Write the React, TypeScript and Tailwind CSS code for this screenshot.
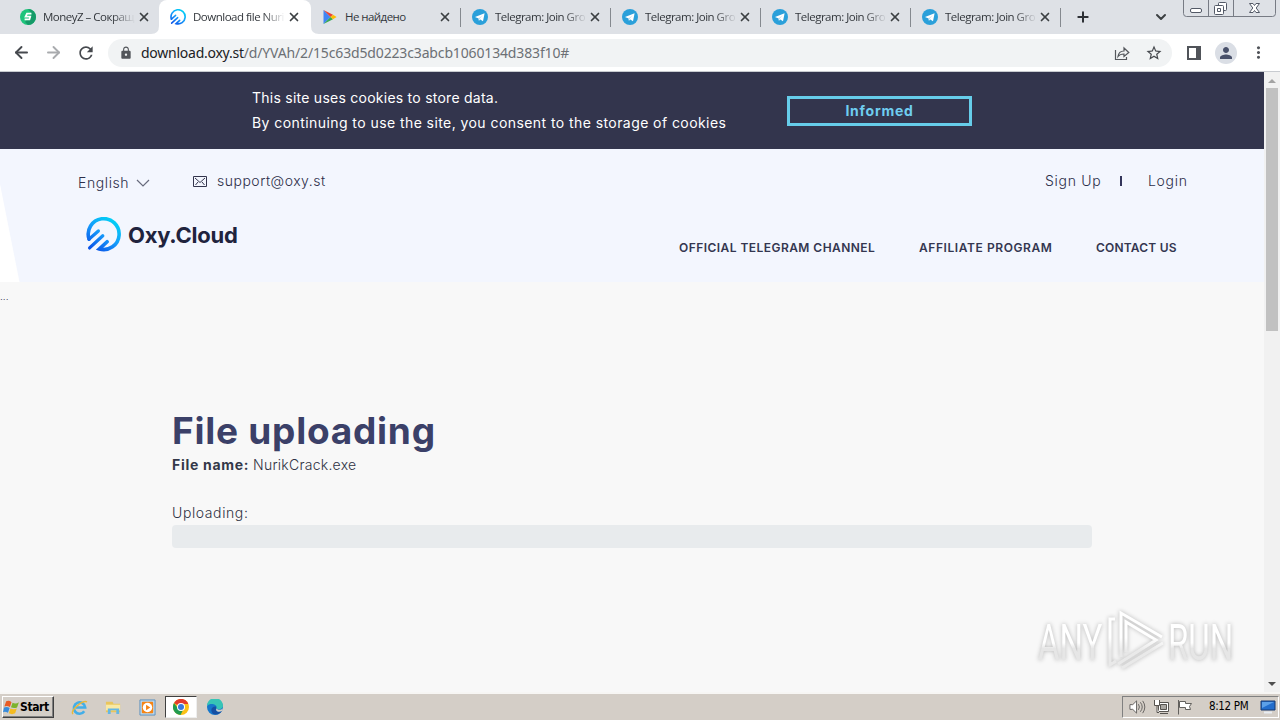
import React from 'react';
import { ArrowLeft, ArrowRight, ChevronDown, Plus, X } from 'lucide-react';
import { MdLock, MdRefresh, MdStarBorder, MdPerson, MdMoreVert } from 'react-icons/md';

const TelegramIcon = () => (
  <svg viewBox="0 0 16 16" className="w-4 h-4 shrink-0">
    <circle cx="8" cy="8" r="8" fill="#2ba0da" />
    <path d="M3 8 12.6 4.2 11 12.3 8.3 10.4 6.9 11.8 6.6 9.4Z" fill="#fff" />
    <path d="M6.6 9.4 10.6 6.3 7.6 9.8 6.9 11.8Z" fill="#b5d8ec" />
  </svg>
);

const MoneyIcon = () => (
  <svg viewBox="0 0 16 16" className="w-4 h-4 shrink-0">
    <circle cx="8" cy="8" r="8" fill="#1fc47c" />
    <path d="M8 0a8 8 0 0 1 0 16L5 13 12 5Z" fill="#159a68" />
    <path d="M11.4 4.6H7L5.6 7.6h4.6l-.8 2.8H4.6" fill="none" stroke="#fff" strokeWidth="1.8" />
  </svg>
);

const PlayStoreIcon = () => (
  <svg viewBox="0 0 16 16" className="w-4 h-4 shrink-0">
    <path d="M1.5 1v14L8.5 8Z" fill="#4285f4" />
    <path d="M1.5 1 11 5.8 8.5 8Z" fill="#ea4335" />
    <path d="M1.5 15 11 10.2 8.5 8Z" fill="#34a853" />
    <path d="M11 5.8 14.6 8 11 10.2 8.5 8Z" fill="#fbbc04" />
  </svg>
);

const OxyLogo = ({ className }: { className: string }) => (
  <svg viewBox="0 0 34 34" className={className} fill="none" strokeLinecap="round">
    <defs>
      <linearGradient id="oxy" x1="28" y1="3" x2="8" y2="32" gradientUnits="userSpaceOnUse">
        <stop offset="0" stopColor="#00d2f5" />
        <stop offset=".5" stopColor="#169cfb" />
        <stop offset="1" stopColor="#0a54e8" />
      </linearGradient>
    </defs>
    <g stroke="url(#oxy)" strokeWidth="3.2">
      <path d="M3 21.500A15 15 0 1 1 13 31L20.500 24" strokeWidth="3.500" />
      <path d="M3 21.500 12 13.500" />
      <path d="M3.500 30 16.300 18.300" />
    </g>
  </svg>
);

const tabs = [
  { title: 'MoneyZ – Сокращ', icon: <MoneyIcon /> },
  { title: 'Download file Nuri', icon: <OxyLogo className="w-4 h-4 shrink-0" />, active: true },
  { title: 'Не найдено', icon: <PlayStoreIcon />, short: true },
  { title: 'Telegram: Join Gro', icon: <TelegramIcon /> },
  { title: 'Telegram: Join Gro', icon: <TelegramIcon /> },
  { title: 'Telegram: Join Gro', icon: <TelegramIcon /> },
  { title: 'Telegram: Join Gro', icon: <TelegramIcon /> },
];

const TabStrip = () => (
  <div className="flex h-[34px] bg-[#dee1e6] pl-[9px] overflow-hidden">
    {tabs.map((tab, i) => (
      <div
        key={i}
        className={`relative flex items-center shrink-0 h-[34px] pl-[11px] ${
          tab.active ? 'w-[152px] bg-white rounded-t-lg' : 'w-[150px]'
        }`}
      >
        {tab.active && (
          <svg viewBox="0 0 168 8" className="absolute -left-2 bottom-0 w-[168px] h-2" fill="#fff">
            <path d="M0 8Q8 8 8 0V8ZM160 0Q160 8 168 8H160Z" />
          </svg>
        )}
        {tab.icon}
        <span
          className={`ml-[7px] w-[94px] whitespace-nowrap font-['Open_Sans',sans-serif] text-[11.5px] text-[#33373c] ${
            tab.short
              ? 'tracking-[-0.55px]'
              : 'tracking-[-0.5px] [mask-image:linear-gradient(to_right,#000_74%,transparent_98%)]'
          }`}
        >
          {tab.title}
        </span>
        <X
          className={`w-[14px] h-[14px] shrink-0 text-[#3c4043] ${i < 2 ? 'ml-0' : '-ml-px'}`}
          strokeWidth={2.9}
        />
        {i > 1 && <span className="absolute right-0 top-2 w-px h-[19px] bg-[#85898f]" />}
      </div>
    ))}
    <Plus className="ml-[14px] mt-[9px] w-4 h-4 text-[#2d3035]" strokeWidth={3} />
    <ChevronDown className="ml-[62px] mt-[9px] w-4 h-4 text-[#3c4043]" strokeWidth={3} />
    <svg viewBox="0 0 93 17" className="ml-[14px] w-[93px] h-[17px]" fill="none" stroke="#777b84">
      <path d="M.5 0V13.5Q.5 16.5 3.5 16.5H89.5Q92.5 16.5 92.5 13.5V0M25.5 0V16M50.5 0V16" />
      <rect x="7.500" y="8.500" width="11" height="4" rx="1.500" fill="#fff" stroke="#535966" />
      <g fill="#fff" stroke="#535966">
        <rect x="35.500" y="2.500" width="8" height="8" rx="1" />
        <rect x="31.500" y="5.500" width="9" height="9" rx="1" />
        <path d="M34.500 8.500h3v3h-3Z" />
        <path d="M66.500 3.500h3.500l1.500 2 1.500-2h3.500l-3.300 4.500 3.300 4.500H73l-1.500-2-1.500 2h-3.500L69.800 8Z" />
      </g>
    </svg>
  </div>
);

const Toolbar = () => (
  <div className="flex items-center h-[38px] bg-white border-b border-[#c8cbd0] pl-[12px] pr-[12px]">
    <ArrowLeft className="w-[19px] h-[19px] text-[#46494e]" strokeWidth={2.4} />
    <ArrowRight className="ml-[13px] w-[19px] h-[19px] text-[#a9abae]" strokeWidth={2.4} />
    <MdRefresh className="ml-[13px] w-5 h-5 text-[#46494e]" />
    <div className="ml-[12px] flex items-center w-[1064px] h-7 rounded-full bg-[#f1f3f4] pl-[11px] pr-[9px]">
      <MdLock className="w-[14px] h-[14px] text-[#53565b]" />
      <span className="ml-2 text-[14px] leading-5 text-[#202124] whitespace-nowrap">
        <span className="tracking-[-0.25px]">download.oxy.st</span>
        <span className="text-[#6c7075] tracking-[-0.15px]">/d/YVAh/2/15c63d5d0223c3abcb1060134d383f10#</span>
      </span>
      <svg viewBox="0 0 16 16" className="ml-auto w-4 h-4" fill="none" stroke="#54575c" strokeWidth="1.2">
        <path d="M1.500 5V14.500H12.500V12M4 11.500C4.500 7.500 7 6 10 6V3L14.800 7.500 10 11.500V9C7.500 9 5.500 9.500 4 11.500Z" />
      </svg>
      <MdStarBorder className="ml-[15px] w-[18px] h-[18px] text-[#46494e]" />
    </div>
    <svg viewBox="0 0 14 14" className="ml-[15px] w-[14px] h-[14px]" fill="#505359">
      <path d="M0 0H14V14H0ZM2 2V12H9V2Z" fillRule="evenodd" />
    </svg>
    <div className="ml-[14px] w-[22px] h-[22px] rounded-full bg-[#dadee5] flex items-center justify-center">
      <MdPerson className="w-[18px] h-[18px] text-[#48506a]" />
    </div>
    <MdMoreVert className="ml-[12px] w-[19px] h-[19px] text-[#505359] shrink-0" />
  </div>
);

const CookieBar = () => (
  <div className="flex h-[77px] bg-[#33354d] pl-[252px]">
    <div className="w-[535px] pt-[13px] text-[14px] leading-[25px] font-normal text-white whitespace-nowrap">
      <p className="tracking-[0.25px]">This site uses cookies to store data.</p>
      <p className="tracking-[0.43px]">By continuing to use the site, you consent to the storage of cookies</p>
    </div>
    <button className="mt-6 w-[185px] h-[30px] border-[3px] border-[#66cdea] text-[14px] leading-none font-bold tracking-[0.75px] text-[#6fcdf0]">
      Informed
    </button>
  </div>
);

const SiteHeader = () => (
  <header className="relative h-[133px] bg-[#f3f6fe] text-[14px] leading-5 text-[#2c2e49]">
    <svg viewBox="0 0 20 98" className="absolute left-0 bottom-0 w-5 h-[98px]">
      <path d="M0 0V98H19.500Z" fill="#fff" />
    </svg>
    <div className="flex pl-[78px] pt-[22px] h-[62px]">
      <div className="flex items-center w-[115px] h-5 mt-[2px]">
        <span className="tracking-[0.6px]">English</span>
        <svg viewBox="0 0 14 8" className="ml-[7px] w-[14px] h-2" fill="none" stroke="#676b7d" strokeWidth="1.200">
          <path d="M1 1 7 7 13 1" />
        </svg>
      </div>
      <div className="flex items-center h-5">
        <svg viewBox="0 0 14 11" className="w-[14px] h-[11px]" fill="none" stroke="#33354d" strokeWidth="1">
          <path d="M.5.5H13.500V10.500H.5ZM2 2 7 6.500 12 2M2.500 9 5 6M11.500 9 9 6" />
        </svg>
        <span className="ml-[10px] tracking-[0.5px]">support@oxy.st</span>
      </div>
      <div className="ml-auto mr-[77px] flex h-5 items-center">
        <span className="w-[75px] tracking-[0.7px]">Sign Up</span>
        <span className="w-[2px] h-[10px] bg-[#33355a]" />
        <span className="ml-[26px] w-[39px] whitespace-nowrap tracking-[0.7px]">Login</span>
      </div>
    </div>
    <div className="flex pl-[86px] pt-[6px]">
      <OxyLogo className="w-[35px] h-[35px]" />
      <span className="ml-[7px] mt-px text-[22px] leading-[34px] font-bold tracking-[-0.25px] text-[#20233d]">Oxy.Cloud</span>
      <nav className="ml-auto mr-[88px] mt-[21px] flex text-[12px] font-semibold whitespace-nowrap text-[#343650]">
        <a className="w-[240px] tracking-[0.45px]">OFFICIAL TELEGRAM CHANNEL</a>
        <a className="w-[177px] tracking-[0.58px]">AFFILIATE PROGRAM</a>
        <a className="w-[80px] tracking-[0.2px]">CONTACT US</a>
      </nav>
    </div>
  </header>
);

const Watermark = () => (
  <div className="absolute left-[1038px] top-[536px] flex w-[196px] h-[66px] items-center font-['Roboto',sans-serif] font-normal text-[50px] leading-[56px] drop-shadow-[0_0_2px_#b4b4b4]">
    <span className="w-[110px] -mr-[42px] mt-[3px] shrink-0 origin-left scale-x-[.66] bg-gradient-to-b from-white from-50% to-[#e6e6e6] to-60% bg-clip-text text-transparent">
      ANY
    </span>
    <svg viewBox="0 0 60 66" className="w-[60px] h-[66px] shrink-0" fill="none" strokeWidth="3">
      <defs>
        <linearGradient id="mark" x1="0" y1="0" x2="0" y2="66" gradientUnits="userSpaceOnUse">
          <stop offset=".45" stopColor="#fff" />
          <stop offset=".65" stopColor="#e9e9e9" />
        </linearGradient>
      </defs>
      <path d="M9 11H4V57L10 53M15 49V5L56 29M20 44V14L50 32 12 56M57 35 16 60" stroke="url(#mark)" />
    </svg>
    <span className="ml-[2px] w-[110px] -mr-[44px] mt-[3px] shrink-0 origin-left scale-x-[.66] bg-gradient-to-b from-white from-50% to-[#e6e6e6] to-60% bg-clip-text text-transparent">
      RUN
    </span>
  </div>
);

const Scrollbar = () => (
  <div className="flex flex-col items-center w-4 h-full bg-[#f1f1f1]">
    <svg viewBox="0 0 16 16" className="w-4 h-4" fill="#a3a3a3"><path d="M4 11 8 7 12 11Z" /></svg>
    <div className="w-3 h-[243px] bg-[#c1c1c1]" />
    <svg viewBox="0 0 16 16" className="mt-auto w-4 h-4" fill="#4e4e4e"><path d="M4 6 8 10 12 6Z" /></svg>
  </div>
);

const Taskbar = () => (
  <div className="flex h-[28px] items-center bg-[#d4cec7] border-t-2 border-[#f7f6f4] font-['DejaVu_Sans_Condensed',sans-serif]">
    <div className="ml-[2px] flex items-center w-[52px] h-[22px] border border-t-white border-l-white border-b-[#404040] border-r-[#404040] shadow-[inset_-1px_-1px_#808080]">
      <svg viewBox="0 0 16 16" className="w-[17px] h-[17px] shrink-0">
        <path d="M3 2Q6 1 8 3L6.500 7.500Q4 6 1.300 7Z" fill="#e85b25" />
        <path d="M9 3.500Q12 5 15 3L13.200 8Q10 9.200 7.500 7.800Z" fill="#7cb32c" />
        <path d="M1 8Q4 7 6.200 8.500L4.700 13Q2 11.500 0 12.500Z" fill="#378bdb" />
        <path d="M7 9Q10 10.400 13 9L11.400 13.500Q8.500 15 5.500 13.500Z" fill="#f4bb22" />
      </svg>
      <span className="text-[12px] font-bold tracking-[-0.4px] text-black">Start</span>
    </div>
    <svg viewBox="0 0 18 18" className="ml-[17px] w-[17px] h-[17px]" fill="none">
      <path d="M14 13A6 6 0 1 1 15 9H5" stroke="#43aee8" strokeWidth="2.800" />
      <path d="M2 16C-1 12 12 1 17 3" stroke="#e9b83a" strokeWidth="1.500" />
    </svg>
    <svg viewBox="0 0 18 18" className="ml-[17px] w-[17px] h-[17px]">
      <path d="M1 3H8L9 5H16V14H1Z" fill="#e9c55c" />
      <path d="M1 6H16V12H1Z" fill="#f9e9a4" />
      <path d="M3 16V10H15V16H12V12H6V16Z" fill="#65b7e4" />
    </svg>
    <svg viewBox="0 0 18 18" className="ml-[17px] w-[17px] h-[17px]">
      <path d="M1 1H17V17H1Z" fill="#b9d6ec" stroke="#5b91bd" />
      <path d="M4 4H14V14H4Z" fill="#f58414" stroke="#f58414" strokeWidth="2" strokeLinejoin="round" />
      <circle cx="9" cy="9" r="5" fill="#fff" />
      <path d="M7.500 6 12 9 7.500 12Z" fill="#f58414" />
    </svg>
    <div className="ml-[9px] flex items-center justify-center w-8 h-[22px] bg-white border border-t-[#404040] border-l-[#404040] border-b-[#eeeeee] border-r-[#eeeeee]">
      <svg viewBox="0 0 16 16" className="w-4 h-4">
        <circle cx="8" cy="8" r="8" fill="#fbc116" />
        <path d="M8 8 1 4A8 8 0 0 1 15 4L15 5H8Z" fill="#e33b2e" />
        <path d="M1 4A8 8 0 0 0 7.500 16L10 11 5.500 10Z" fill="#229b50" />
        <circle cx="8" cy="8" r="4" fill="#fff" />
        <circle cx="8" cy="8" r="3" fill="#3879dc" />
      </svg>
    </div>
    <svg viewBox="0 0 16 16" className="ml-[10px] w-4 h-4">
      <circle cx="8" cy="8" r="8" fill="#1677cb" />
      <path d="M0 7A8 8 0 0 1 16 7C16 10 12 11 9.500 9.500 11 6 4 3 0 7Z" fill="#37c5b6" />
      <path d="M9 9.500C8 13 12 13.500 15 12A8 8 0 0 1 6 15C2 10 6 7 9 7.500Z" fill="#164fa2" />
      <path d="M9.500 9.500C11 11.500 14 11 16 9.500L15 12C12 13.500 8 12.500 9.500 9.500Z" fill="#d4cec7" />
    </svg>
    <div className="ml-auto mr-px flex items-center w-[157px] h-[22px] border border-t-[#808080] border-l-[#808080] border-b-white border-r-white">
      <svg viewBox="0 0 18 16" className="ml-[6px] w-[17px] h-4" fill="#fff" stroke="#62605d">
        <path d="M1 5.500H4L8 1.500V14.500L4 10.500H1Z" />
        <path d="M10 5Q12 8 10 11M12 3Q16 8 12 13M14.500 1.500Q19 8 14.500 14.500" fill="none" />
      </svg>
      <svg viewBox="0 0 17 16" className="ml-[7px] w-[17px] h-4" fill="#fff" stroke="#56534f">
        <path d="M5.500 3.500H15.500V12.500H5.500ZM7 14.500H15" />
        <path d="M7.500 5.500H13.500V10.500H7.500Z" fill="#aaa7a2" />
        <path d="M1.500 1V6.500H6.500V1M4 7V13.500H6" />
      </svg>
      <svg viewBox="0 0 16 16" className="ml-[7px] w-4 h-4" fill="#fff" stroke="#62605d">
        <path d="M1.500 1V15.500M2.500 2.500H8.500V4.500H14.500L12.500 7.500 13.500 10.500H8.500V8.500H2.500Z" />
      </svg>
      <span className="ml-[16px] w-[44px] text-[11.5px] tracking-[-0.35px] text-black whitespace-nowrap">8:12 PM</span>
      <svg viewBox="0 0 16 14" className="ml-[7px] w-4 h-[14px] shrink-0">
        <path d="M1 1H15V10H1Z" fill="#226dcc" stroke="#16396f" />
        <path d="M2 2H14L2 8Z" fill="#5ca0e8" />
        <path d="M4 12.500H12" stroke="#e8edf2" strokeWidth="2" />
      </svg>
    </div>
  </div>
);

export default function App() {
  return (
    <div className="w-[1280px] h-[720px] overflow-hidden flex flex-col font-['Noto_Sans',sans-serif]">
      <TabStrip />
      <Toolbar />
      <div className="relative flex h-[620px] bg-[#f8f8f8] font-light font-['Inter',sans-serif]">
        <main className="w-[1264px]">
          <CookieBar />
          <SiteHeader />
          <div className="h-[123px] pt-[6px] text-[10px] leading-4 text-[#33354d]">...</div>
          <section className="ml-[172px] w-[920px] text-[14px] leading-6 text-[#2f3243]">
            <h1 className="h-[48px] pt-[5px] text-[37px] leading-[42px] font-bold tracking-[0.75px] text-[#3b4068]">File uploading</h1>
            <p className="whitespace-nowrap">
              <span className="font-bold tracking-[0.7px] text-[#343849]">File name:</span>{' '}
              <span className="tracking-[0.25px]">NurikCrack.exe</span>
            </p>
            <p className="mt-6 tracking-[0.6px]">Uploading:</p>
            <div className="h-[23px] rounded bg-[#e8ebed]" />
          </section>
        </main>
        <Scrollbar />
        <Watermark />
      </div>
      <Taskbar />
    </div>
  );
}
